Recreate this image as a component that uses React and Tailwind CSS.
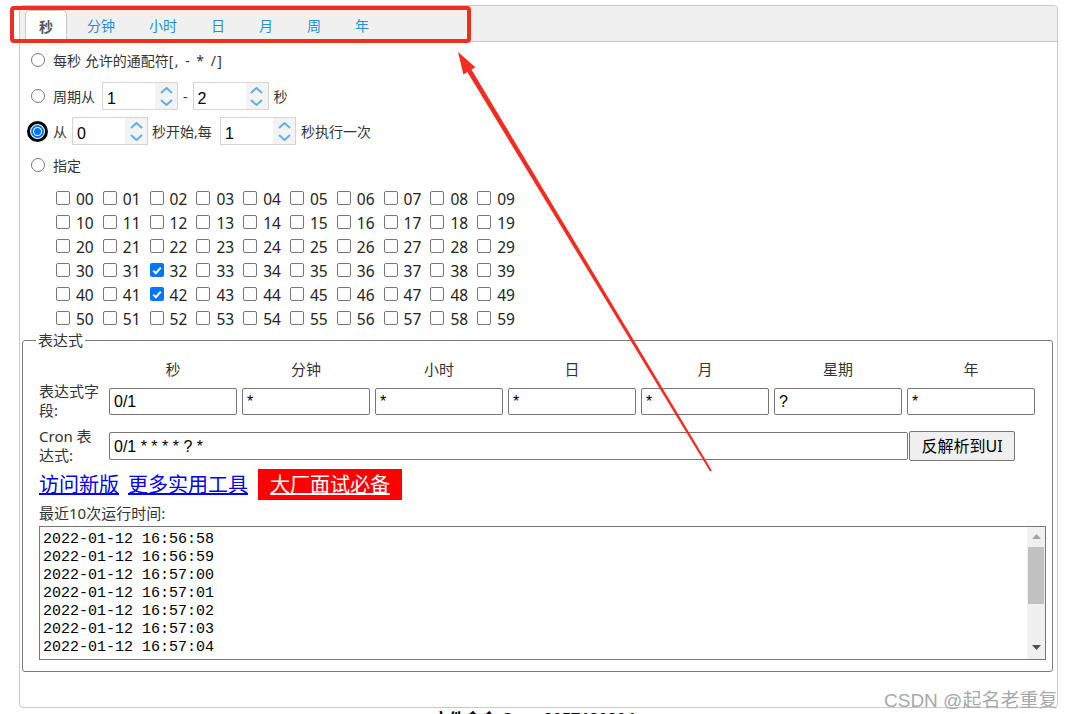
import React from "react";

const tabs = ["秒", "分钟", "小时", "日", "月", "周", "年"];
const fields = [
  { name: "秒", value: "0/1" },
  { name: "分钟", value: "*" },
  { name: "小时", value: "*" },
  { name: "日", value: "*" },
  { name: "月", value: "*" },
  { name: "星期", value: "?" },
  { name: "年", value: "*" },
];
const times = [
  "2022-01-12 16:56:58",
  "2022-01-12 16:56:59",
  "2022-01-12 16:57:00",
  "2022-01-12 16:57:01",
  "2022-01-12 16:57:02",
  "2022-01-12 16:57:03",
  "2022-01-12 16:57:04",
];
const checked = ["32", "42"];

function Radio({ on }) {
  if (on) {
    return (
      <span className="flex h-[21px] w-[21px] shrink-0 items-center justify-center rounded-full border-[3px] border-black bg-white">
        <span className="flex h-[13px] w-[13px] items-center justify-center rounded-full bg-[#0075ff]">
          <span className="flex h-[9px] w-[9px] items-center justify-center rounded-full bg-white">
            <span className="h-[7px] w-[7px] rounded-full bg-[#0075ff]" />
          </span>
        </span>
      </span>
    );
  }
  return (
    <span className="flex h-[21px] w-[21px] shrink-0 items-center justify-center">
      <span className="h-[14px] w-[14px] rounded-full border border-[#767676] bg-white" />
    </span>
  );
}

function Spin({ value }) {
  return (
    <div className="flex h-[28px] w-[76px] shrink-0 border border-[#d4d4d4] bg-white">
      <div className="flex-1 pl-[4px] pt-[7px] font-['Liberation_Sans',sans-serif] text-[16px] leading-[18px] text-black">
        {value}
      </div>
      <div className="flex w-[22px] flex-col items-center justify-center gap-[5px] bg-[#f3f3f3]">
        <svg width="13" height="7" viewBox="0 0 13 7">
          <path d="M1 6 L6.5 1 L12 6" fill="none" stroke="#5fb0ea" strokeWidth="2" />
        </svg>
        <svg width="13" height="7" viewBox="0 0 13 7">
          <path d="M1 1 L6.5 6 L12 1" fill="none" stroke="#5fb0ea" strokeWidth="2" />
        </svg>
      </div>
    </div>
  );
}

function Check({ on }) {
  if (on) {
    return (
      <span className="flex h-[14px] w-[14px] shrink-0 items-center justify-center rounded-[2px] bg-[#0075ff]">
        <svg width="10" height="9" viewBox="0 0 10 9">
          <path d="M1.2 4.6 L3.8 7.2 L8.8 1.6" fill="none" stroke="#fff" strokeWidth="2" />
        </svg>
      </span>
    );
  }
  return <span className="h-[14px] w-[14px] shrink-0 rounded-[2px] border border-[#767676] bg-white" />;
}

export default function App() {
  return (
    <div className="relative h-[714px] w-[1068px] overflow-hidden bg-white font-['Noto_Sans','Noto_Sans_CJK_SC',sans-serif] text-[#333]">
      <div className="ml-[19px] mt-[5px] flex h-[703px] w-[1039px] flex-col rounded-[4px] border border-[#c8c8c8]">
        {/* tab bar */}
        <div className="flex h-[36px] shrink-0 items-end rounded-t-[4px] border-b border-[#c8c8c8] bg-[#f0f0f0] pl-[5px]">
          {tabs.map((t, i) => (
            <div
              key={t}
              className={
                i === 0
                  ? "-mb-px mr-[6px] flex h-[32px] items-center rounded-t-[5px] border border-b-0 border-[#c8c8c8] bg-white px-[13px] text-[14px] font-bold text-[#555]"
                  : "mr-[6px] flex h-[31px] items-center border border-transparent px-[13px] text-[14px] text-[#1e8fd8]"
              }
            >
              {t}
            </div>
          ))}
        </div>

        {/* radio rows */}
        <div className="flex flex-col pl-[7px] text-[14px]">
          <div className="mt-[4px] flex h-[28px] items-center">
            <Radio />
            <span className="ml-[5px]">
              每秒 允许的通配符<span className="tracking-[1.5px]">[, - * /]</span>
            </span>
          </div>
          <div className="mt-[8px] flex h-[28px] items-center">
            <Radio />
            <span className="ml-[5px] mr-[7px]">周期从</span>
            <Spin value="1" />
            <span className="mx-[5px]">-</span>
            <Spin value="2" />
            <span className="ml-[5px]">秒</span>
          </div>
          <div className="mt-[7px] flex h-[28px] items-center">
            <Radio on />
            <span className="ml-[5px] mr-[5px]">从</span>
            <Spin value="0" />
            <span className="ml-[4px] mr-[4px] w-[64px]">秒开始,每</span>
            <Spin value="1" />
            <span className="ml-[5px]">秒执行一次</span>
          </div>
          <div className="mt-[6px] flex h-[28px] items-center">
            <Radio />
            <span className="ml-[5px]">指定</span>
          </div>
        </div>

        {/* second checkboxes */}
        <div className="mt-[7px] grid grid-cols-[repeat(10,46.8px)] pl-[36px] text-[15.5px] text-[#222]">
          {Array.from({ length: 60 }, (_, n) => {
            const s = String(n).padStart(2, "0");
            return (
              <div key={s} className="flex h-[24px] items-center gap-[6px]">
                <Check on={checked.includes(s)} />
                <span className="pt-[2px] leading-[18px]">{s}</span>
              </div>
            );
          })}
        </div>

        {/* expression */}
        <fieldset className="ml-[2px] mr-[4px] rounded-[3px] border border-[#7a7a7a] pb-[11px] pl-[16px] pr-[6px] text-[15px] text-[#333]">
          <legend className="-ml-[3px] px-[2px] leading-[20px]">表达式</legend>
          <div className="mt-[9px] grid h-[20px] grid-cols-[67.5px_repeat(7,133px)] items-center leading-[20px]">
            <span />
            {fields.map((f) => (
              <span key={f.name} className="text-center">
                {f.name}
              </span>
            ))}
          </div>
          <div className="mt-[3px] grid grid-cols-[67.5px_repeat(7,133px)] items-center">
            <span className="leading-[19px]">
              表达式字
              <br />
              段:
            </span>
            {fields.map((f) => (
              <div key={f.name} className="flex justify-center">
                <div className="h-[27px] w-[128px] rounded-[2px] border border-[#767676] bg-white pl-[4px] pt-[3px] font-['Liberation_Sans',sans-serif] text-[16px] leading-[19px] text-black">
                  {f.value}
                </div>
              </div>
            ))}
          </div>
          <div className="mt-[7px] flex items-center">
            <span className="w-[70px] leading-[19px]">
              Cron 表
              <br />
              达式:
            </span>
            <div className="h-[28px] w-[799px] rounded-[2px] border border-[#767676] bg-white pl-[4px] pt-[4px] font-['Liberation_Sans',sans-serif] text-[16px] leading-[19px] text-black">
              0/1 * * * * ? *
            </div>
            <button className="ml-px h-[30px] w-[106px] rounded-[2px] border border-[#767676] bg-[#efefef] text-[16px] text-black">
              反解析到UI
            </button>
          </div>
          <div className="mt-[4px] flex h-[31px] items-center text-[20px] leading-[24px]">
            <a href="#" className="text-[#0000ee] underline">
              访问新版
            </a>
            <a href="#" className="ml-[9px] text-[#0000ee] underline">
              更多实用工具
            </a>
            <span className="ml-[10px] flex h-[31px] items-center bg-[#ff0000] px-[12px]">
              <a href="#" className="text-white underline">
                大厂面试必备
              </a>
            </span>
          </div>
          <div className="mt-[4px] leading-[18px]">最近10次运行时间:</div>
          <div className="mt-[4px] flex h-[134px] border border-[#767676] bg-white">
            <div className="flex-1 pl-[3px] pt-[4px] font-['Liberation_Mono',monospace] text-[15px] leading-[18px] text-black">
              {times.map((t) => (
                <div key={t}>{t}</div>
              ))}
            </div>
            <div className="flex w-[18px] flex-col items-center bg-[#f0f0f0]">
              <svg className="mt-[7px]" width="9" height="5" viewBox="0 0 9 5">
                <path d="M0 5 L4.5 0 L9 5 Z" fill="#a3a3a3" />
              </svg>
              <div className="mt-[8px] h-[57px] w-[16px] bg-[#c1c1c1]" />
              <div className="flex-1" />
              <svg className="mb-[9px]" width="9" height="5" viewBox="0 0 9 5">
                <path d="M0 0 L9 0 L4.5 5 Z" fill="#505050" />
              </svg>
            </div>
          </div>
        </fieldset>
      </div>

      <div className="pt-[1px] text-center text-[16px] font-bold leading-[20px] text-black">
        文件命令 Cron-2057120204
      </div>

      {/* watermark */}
      <div className="absolute left-[884px] top-[690px] font-['Liberation_Sans','Noto_Sans_CJK_SC',sans-serif] text-[19px] leading-[22px] text-[#a8a8a8]">
        CSDN @起名老重复
      </div>

      {/* annotation */}
      <div className="pointer-events-none absolute left-[10px] top-[6px] h-[37px] w-[461px] rounded-[4px] border-[4px] border-[#f32c21]" />
      <svg className="pointer-events-none absolute left-0 top-0" width="1068" height="714">
        <polygon
          points="711.9,470.5 471.5,69.5 475.4,67.2 458,52 463.4,74.4 467.3,72.1 710.1,471.5"
          fill="#f32c21"
        />
      </svg>
    </div>
  );
}
